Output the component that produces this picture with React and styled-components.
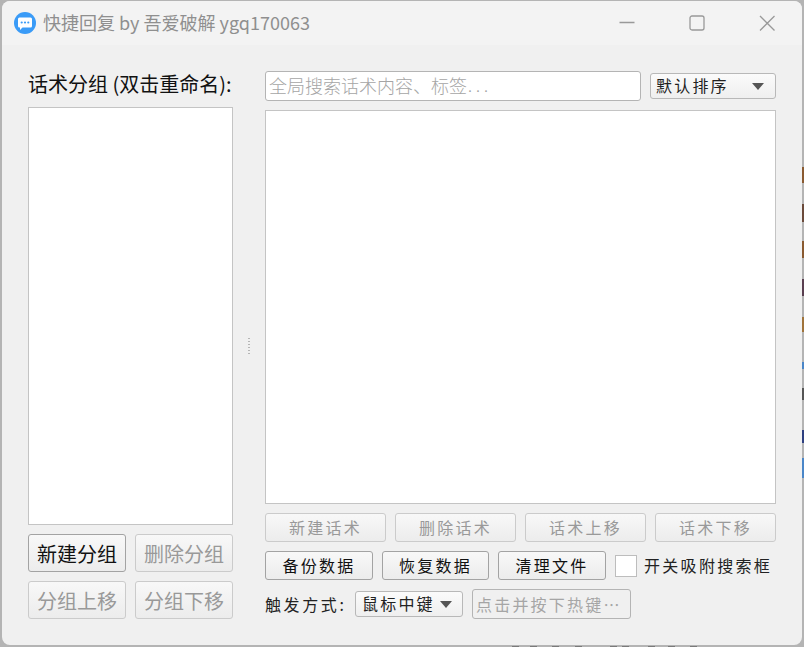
import React from "react";
import styled, { createGlobalStyle } from "styled-components";

const Global = createGlobalStyle`
  html, body { margin: 0; padding: 0; background: #b4b4b4; }
  * { box-sizing: border-box; }
`;

const CJK = `"Noto Sans CJK SC", "Liberation Sans", sans-serif`;

const Desktop = styled.div`
  width: 804px; height: 647px; padding: 1px 2px 2px 2px; overflow: hidden; position: relative; background: #b4b4b4;
`;
const Backdrop = styled.svg`position: absolute; left: 0; top: 0; width: 804px; height: 647px; display: block;`;
const Win = styled.div`
  width: 800px; height: 644px; border-radius: 8px; background: #f0f0f0; overflow: hidden; position: relative;
  display: flex; flex-direction: column; font-family: ${CJK}; color: #111;
`;
const TitleBar = styled.div`
  height: 44px; flex: none; background: #f3f3f3; display: flex; align-items: center; padding: 0 27px 0 11px;
`;
const AppIcon = styled.svg`width: 24px; height: 24px; flex: none; margin-right: 6px;`;
const Title = styled.div`font-size: 18px; color: #8f8f8f; flex: 1; white-space: nowrap; line-height: 24px; padding-bottom: 2px;`;
const WinIcons = styled.div`display: flex; align-items: center; gap: 54px;`;
const WinIcon = styled.svg`width: 16px; height: 16px; display: block; fill: none; stroke: #999; stroke-width: 1.3;`;
const Main = styled.div`flex: 1; display: flex; padding: 26px 26px 26px 26px; gap: 32px; min-height: 0; position: relative;`;
const Left = styled.div`width: 205px; flex: none; display: flex; flex-direction: column;`;
const GroupLabel = styled.div`font-size: 20px; line-height: 26px; height: 36px; white-space: nowrap;`;
const ListBox = styled.div`flex: 1; background: #fff; border: 1px solid #c4c4c4; min-height: 0;`;
const GroupGrid = styled.div`display: grid; grid-template-columns: 98px 98px; column-gap: 9px; row-gap: 9px; margin-top: 9px;`;
const Btn = styled.div`
  height: ${p => p.$h}px; border: 1px solid ${p => p.$on ? "#a3a3a3" : "#cbcbcb"}; border-radius: 3px;
  background: linear-gradient(#f8f8f8, #ececec);
  color: ${p => p.$on ? "#111" : "#999"};
  font-size: ${p => p.$fs}px; letter-spacing: ${p => p.$ls || 0}px;
  padding-bottom: ${p => p.$pb || 0}px;
  display: flex; align-items: center; justify-content: center; white-space: nowrap;
`;
const Right = styled.div`flex: 1; min-width: 0; display: flex; flex-direction: column;`;
const TopRow = styled.div`height: 30px; display: flex; align-items: center; gap: 9px; flex: none;`;
const Search = styled.div`
  width: 376px; height: 30px; background: #fff; border: 1px solid #b4b4b4; border-radius: 3px;
  color: #a5a5a5; font-size: 18px; padding: 0 0 3px 3px; display: flex; align-items: center; white-space: nowrap; font-weight: 300;
`;
const Dots = styled.span`letter-spacing: 4px; font-size: 16px; padding-left: 1px;`;
const Combo = styled.div`
  width: ${p => p.$w}px; height: 26px; border: 1px solid #b8b8b8; border-radius: 3px;
  background: linear-gradient(#fbfbfb, #efefef); font-size: 16px; letter-spacing: 2.2px; color: #222;
  display: flex; align-items: center; justify-content: space-between; padding: 0 ${p => p.$pr}px 0 ${p => p.$pl}px; white-space: nowrap;
`;
const ComboText = styled.span`position: relative; top: -1px;`;
const Caret = styled.svg`width: 12px; height: 7px; fill: #555; flex: none;`;
const BigList = styled.div`flex: 1; margin-top: 9px; background: #fff; border: 1px solid #c4c4c4; min-height: 0;`;
const Row = styled.div`display: flex; align-items: center; flex: none; margin-top: 9px; gap: 9px; height: ${p => p.$h}px;`;
const Cell = styled.div`width: ${p => p.$w}px; flex: none;`;
const Check = styled.div`width: 22px; height: 22px; background: #fff; border: 1px solid #bdbdbd; flex: none;`;
const CheckLabel = styled.div`font-size: 16px; letter-spacing: 2.3px; margin-left: -2px; padding-bottom: 1px; white-space: nowrap; color: #222;`;
const FieldLabel = styled.div`font-size: 16px; letter-spacing: 2.6px; width: 81px; padding-bottom: 1px; white-space: nowrap; flex: none; color: #222;`;
const Hotkey = styled.div`
  width: 159px; height: 30px; background: #f0f0f0; border: 1px solid #b4b4b4; border-radius: 3px;
  color: #a5a5a5; font-size: 16px; letter-spacing: 2.2px; padding: 0 0 1px 3px; display: flex; align-items: center; white-space: nowrap;
`;
const Splitter = styled.div`
  position: absolute; left: 246px; top: 293px; width: 2px; height: 16px;
  background: repeating-linear-gradient(#b5b5b5 0 1px, transparent 1px 3px);
`;

const CaretIcon = () => <Caret viewBox="0 0 12 7"><path d="M0 0h12L6 7z" /></Caret>;

const edgeMarks = [
  [167, 16, "#8a5a30"], [204, 18, "#6b4a3a"], [241, 17, "#8a5a30"], [279, 17, "#5a3f50"],
  [317, 15, "#a0733a"], [362, 7, "#4a86c8"], [388, 12, "#555"], [430, 13, "#2d3f80"], [458, 20, "#4a86c8"],
];
const bottomMarks = [512, 530, 552, 575, 610, 622, 648, 668, 690];

export default function App() {
  return (
    <Desktop>
      <Global />
      <Backdrop viewBox="0 0 804 647">
        {edgeMarks.map(([y, h, c]) => <rect key={y} x="802" y={y} width="2" height={h} fill={c} />)}
        {bottomMarks.map(x => <rect key={x} x={x} y="646" width="7" height="1" fill="#7a7a7a" />)}
      </Backdrop>
      <Win>
        <TitleBar>
          <AppIcon viewBox="0 0 24 24">
            <circle cx="12" cy="12" r="11" fill="#3a9bf7" />
            <path d="M6.5 6.5h11a1.5 1.5 0 0 1 1.5 1.5v7a1.5 1.5 0 0 1-1.5 1.5h-8l-2.5 2.5v-2.5h-.5A1.5 1.5 0 0 1 5 15V8a1.5 1.5 0 0 1 1.5-1.5z" fill="#fff" />
            <circle cx="8.7" cy="11.5" r="1.1" fill="#3a9bf7" />
            <circle cx="12" cy="11.5" r="1.1" fill="#3a9bf7" />
            <circle cx="15.3" cy="11.5" r="1.1" fill="#3a9bf7" />
          </AppIcon>
          <Title>快捷回复 by 吾爱破解 ygq170063</Title>
          <WinIcons>
            <WinIcon viewBox="0 0 16 16"><path d="M0.5 7.5h15" /></WinIcon>
            <WinIcon viewBox="0 0 16 16"><rect x="1" y="1" width="14" height="14" rx="2" /></WinIcon>
            <WinIcon viewBox="0 0 16 16"><path d="M1 1l14.5 14.5M15.5 1L1 15.5" /></WinIcon>
          </WinIcons>
        </TitleBar>
        <Main>
          <Left>
            <GroupLabel>话术分组 (双击重命名):</GroupLabel>
            <ListBox />
            <GroupGrid>
              <Btn $on $h={38} $fs={20}>新建分组</Btn>
              <Btn $h={38} $fs={20}>删除分组</Btn>
              <Btn $h={38} $fs={20}>分组上移</Btn>
              <Btn $h={38} $fs={20}>分组下移</Btn>
            </GroupGrid>
          </Left>
          <Splitter />
          <Right>
            <TopRow>
              <Search>全局搜索话术内容、标签<Dots>...</Dots></Search>
              <Combo $w={126} $pl={5} $pr={11}><ComboText>默认排序</ComboText><CaretIcon /></Combo>
            </TopRow>
            <BigList />
            <Row $h={29}>
              {["新建话术", "删除话术", "话术上移", "话术下移"].map(t => (
                <Cell $w={121} key={t}><Btn $h={29} $fs={16} $ls={2.2} $pb={2}>{t}</Btn></Cell>
              ))}
            </Row>
            <Row $h={29}>
              <Cell $w={108}><Btn $on $h={29} $fs={16} $ls={2.2} $pb={2}>备份数据</Btn></Cell>
              <Cell $w={107}><Btn $on $h={29} $fs={16} $ls={2.2} $pb={2}>恢复数据</Btn></Cell>
              <Cell $w={108}><Btn $on $h={29} $fs={16} $ls={2.2} $pb={2}>清理文件</Btn></Cell>
              <Check />
              <CheckLabel>开关吸附搜索框</CheckLabel>
            </Row>
            <Row $h={30}>
              <FieldLabel>触发方式:</FieldLabel>
              <Combo $w={108} $pl={6} $pr={10}><ComboText>鼠标中键</ComboText><CaretIcon /></Combo>
              <Hotkey>点击并按下热键…</Hotkey>
            </Row>
          </Right>
        </Main>
      </Win>
    </Desktop>
  );
}
